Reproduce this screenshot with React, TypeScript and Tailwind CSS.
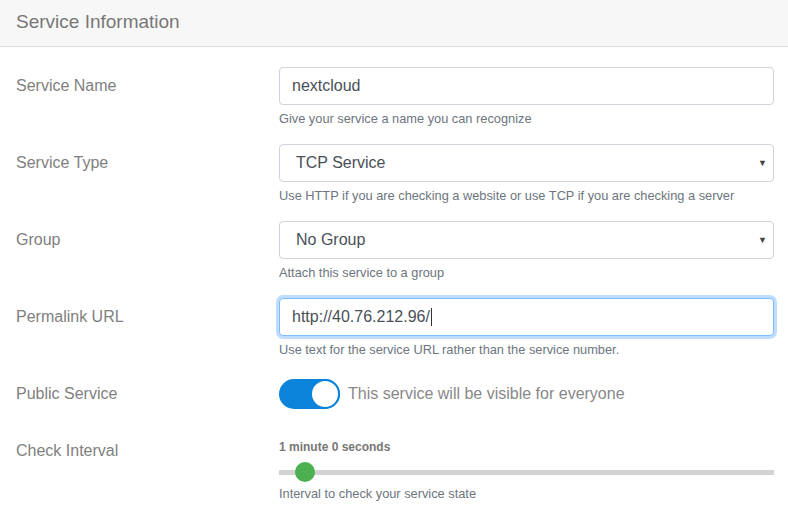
import React from 'react';

const font = { fontFamily: '"Liberation Sans", Arial, sans-serif' };

function Row({ label, children, labelClass = 'pt-[7px]' }: { label: string; children: React.ReactNode; labelClass?: string }) {
  return (
    <div className="flex mb-4">
      <label className={`w-[263px] shrink-0 text-[16px] leading-6 text-[#808080] ${labelClass}`}>{label}</label>
      <div className="w-[495px]">{children}</div>
    </div>
  );
}

function Help({ children }: { children: React.ReactNode }) {
  return <small className="block mt-1 text-[12.8px] leading-[19px] text-[#6c757d]">{children}</small>;
}

function Select({ value }: { value: string }) {
  return (
    <div className="relative h-[38px] rounded border border-[#ced4da] bg-white flex items-center pl-4 text-[16px] text-[#495057]">
      {value}
      <span className="absolute right-[6px] top-[12px] text-[9px] text-[#444]">▼</span>
    </div>
  );
}

export default function App() {
  return (
    <div className="w-[788px] h-[523px] bg-white overflow-hidden" style={font}>
      <div className="h-[47px] bg-[#f7f7f7] border-b border-[#dcdcdc] flex items-center px-4">
        <h5 className="text-[19px] text-[#777] pb-px">Service Information</h5>
      </div>
      <div className="pt-5 pl-4">
        <Row label="Service Name">
          <div className="h-[38px] rounded border border-[#ced4da] bg-white flex items-center px-3 text-[16px] text-[#495057]">
            nextcloud
          </div>
          <Help>Give your service a name you can recognize</Help>
        </Row>
        <Row label="Service Type">
          <Select value="TCP Service" />
          <Help>Use HTTP if you are checking a website or use TCP if you are checking a server</Help>
        </Row>
        <Row label="Group">
          <Select value="No Group" />
          <Help>Attach this service to a group</Help>
        </Row>
        <Row label="Permalink URL">
          <div className="h-[38px] rounded border border-[#80bdff] bg-white flex items-center px-3 text-[16px] text-[#495057] shadow-[0_0_0_3px_rgba(0,123,255,0.25)]">
            http://40.76.212.96/<span className="inline-block w-px h-[18px] bg-[#333] ml-px" />
          </div>
          <Help>Use text for the service URL rather than the service number.</Help>
        </Row>
        <div className="flex pt-[4px] mb-[22px]">
          <label className="w-[263px] shrink-0 text-[16px] leading-6 text-[#808080] pt-[3px]">Public Service</label>
          <div className="flex items-center">
            <div className="relative w-[61px] h-[30px] rounded-full bg-[#0a84da]">
              <div className="absolute right-0 top-0 w-[30px] h-[30px] rounded-full bg-white border-2 border-[#0a84da]" />
            </div>
            <span className="ml-2 text-[16px] text-[#888]">This service will be visible for everyone</span>
          </div>
        </div>
        <Row label="Check Interval" labelClass="pt-[8px]">
          <div className="text-[12px] font-bold text-[#777] leading-[18px] pt-[7px]">1 minute 0 seconds</div>
          <div className="relative h-[22px] mt-[5px] flex items-center">
            <div className="w-full h-[5px] bg-[#d3d3d3]" />
            <div className="absolute left-[16px] top-[1px] w-[20px] h-[20px] rounded-full bg-[#4caf50]" />
          </div>
          <div className="-mt-[3px]">
            <Help>Interval to check your service state</Help>
          </div>
        </Row>
      </div>
    </div>
  );
}
